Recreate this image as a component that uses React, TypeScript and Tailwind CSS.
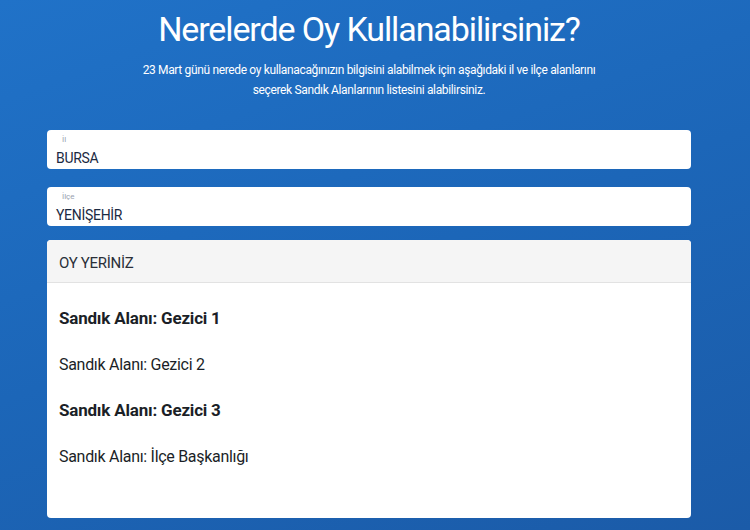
const font = { fontFamily: 'Roboto, "DejaVu Sans", sans-serif' };

const items = [
  { name: "Sandık Alanı: Gezici 1", bold: true },
  { name: "Sandık Alanı: Gezici 2", bold: false },
  { name: "Sandık Alanı: Gezici 3", bold: true },
  { name: "Sandık Alanı: İlçe Başkanlığı", bold: false },
];

function SelectBox({ label, value }: { label: string; value: string }) {
  return (
    <div className="bg-white rounded-[4px] h-[39px] pl-[9px] pt-[5px]">
      <div className="text-[8px] leading-[10px] text-gray-400 pl-[6px]">{label}</div>
      <div className="text-[14px] leading-[18px] text-[#1b2a42] mt-[4px] tracking-[-0.3px]">{value}</div>
    </div>
  );
}

export default function App() {
  return (
    <div
      className="w-[750px] h-[530px] overflow-hidden bg-[linear-gradient(160deg,#2072c8_0%,#1c66b8_50%,#1b5ba8_100%)] text-white"
      style={font}
    >
      <div className="pr-[12px]">
        <h1 className="text-center text-[34px] leading-[44px] pt-[7px] tracking-[-1.1px]">
          Nerelerde Oy Kullanabilirsiniz?
        </h1>
        <p className="text-center text-[12px] leading-[20px] mt-[9px] tracking-[-0.35px]">
          23 Mart günü nerede oy kullanacağınızın bilgisini alabilmek için aşağıdaki il ve ilçe alanlarını
          <br />
          seçerek Sandık Alanlarının listesini alabilirsiniz.
        </p>
      </div>
      <div className="ml-[47px] w-[644px] mt-[30px] flex flex-col gap-[18px]">
        <SelectBox label="İl" value="BURSA" />
        <SelectBox label="İlçe" value="YENİŞEHİR" />
      </div>
      <div className="ml-[47px] w-[644px] mt-[14px] bg-white rounded-[4px] overflow-hidden h-[278px] text-[#1b1f27]">
        <div className="bg-[#f5f5f5] border-b border-[#e2e2e2] h-[43px] flex items-center px-[12px] pt-[5px] text-[15px] text-[#2a2f38] tracking-[-0.3px]">
          OY YERİNİZ
        </div>
        <div className="px-[12px] pt-[13px] flex flex-col">
          {items.map((it) => (
            <div
              key={it.name}
              className={`h-[46px] flex items-center tracking-[-0.2px] ${it.bold ? "font-bold text-[17px]" : "text-[16px] tracking-[-0.3px]"}`}
            >
              {it.name}
            </div>
          ))}
        </div>
      </div>
    </div>
  );
}
